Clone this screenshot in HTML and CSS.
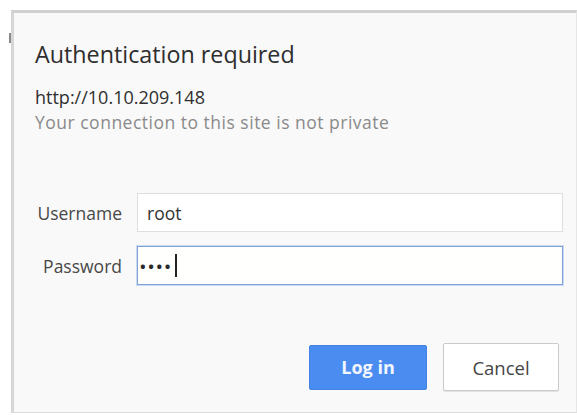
FILE: index.html
```html
<!DOCTYPE html>
<html lang="en">
<head>
<meta charset="utf-8">
<title>Authentication required</title>
<link rel="stylesheet" href="styles.css">
</head>
<body>
<div class="dialog">
  <h1 class="title">Authentication required</h1>
  <div class="origin">http://10.10.209.148</div>
  <div class="warning">Your connection to this site is not private</div>
  <form class="fields">
    <label class="label" for="user">Username</label>
    <div class="input"><span id="user">root</span></div>
    <label class="label" for="pass">Password</label>
    <div class="input focused"><span id="pass" class="dots">••••</span><span class="caret"></span></div>
  </form>
  <div class="actions">
    <button class="btn primary" type="button">Log in</button>
    <button class="btn secondary" type="button">Cancel</button>
  </div>
</div>
</body>
</html>
```
FILE: styles.css
```css
html, body {
  margin: 0;
  padding: 0;
  background: #ffffff;
}

body {
  font-family: "Open Sans", "Noto Sans", sans-serif;
  color: #333333;
  width: 577px;
  height: 415px;
  overflow: hidden;
  position: relative;
}

/* stray edge of the window behind the dialog */
body::before {
  content: "";
  position: absolute;
  left: 9px;
  top: 33px;
  width: 2px;
  height: 10px;
  background: #8a8a8a;
}

.dialog {
  margin: 10px 0 0 11px;
  width: 566px;
  height: 403px;
  box-sizing: border-box;
  background: #f9f9f9;
  border-top: 3px solid #d0d0d0;
  border-left: 3px solid #d6d6d6;
  border-right: 1px solid #e6e6e6;
  border-bottom: 1px solid #dcdcdc;
  padding: 25px 0 0 21px;
}

.title {
  margin: 0;
  font-size: 23.3px;
  font-weight: 400;
  line-height: 32px;
  color: #2e2e2e;
}

.origin {
  margin-top: 15px;
  font-size: 18px;
  line-height: 25px;
  color: #2f2f2f;
}

.warning {
  font-size: 17.5px;
  line-height: 25px;
  letter-spacing: 0.5px;
  color: #8a8a8a;
}

.fields {
  margin-top: 58px;
  display: grid;
  grid-template-columns: 87px 426px;
  column-gap: 15px;
  row-gap: 14px;
  align-items: center;
}

.label {
  text-align: right;
  font-size: 17.5px;
  color: #484848;
}

.input {
  height: 39px;
  box-sizing: border-box;
  background: #ffffff;
  border: 1px solid #dfdfdf;
  padding: 0 9px;
  display: flex;
  align-items: center;
  font-size: 17.5px;
  color: #333333;
}

.input.focused {
  border: 1px solid #7fa2d8;
  box-shadow: 0 0 0 1px #c9daf2;
  background: #fffffd;
  padding-left: 2px;
}

.dots {
  font-size: 15px;
  font-weight: 700;
  letter-spacing: 2.6px;
  color: #2a2a2a;
}

.caret {
  display: inline-block;
  width: 2px;
  height: 23px;
  background: #222222;
  margin-left: 2px;
}

.actions {
  margin-top: 58px;
  display: flex;
  align-items: center;
  gap: 16px;
  padding-left: 274px;
}

.btn {
  box-sizing: border-box;
  border-radius: 2px;
  font-family: "Open Sans", "Noto Sans", sans-serif;
  font-size: 18.5px;
  padding: 0;
}

.btn.primary {
  width: 118px;
  height: 45px;
  background: #4b8cf0;
  border: 1px solid #4280e2;
  color: #f2f6fe;
  font-weight: 700;
  font-size: 18px;
}

.btn.secondary {
  width: 116px;
  height: 48px;
  background: #ffffff;
  border: 1px solid #cbcbcb;
  color: #454545;
  box-shadow: 0 1px 1px rgba(0, 0, 0, 0.1);
}
```
